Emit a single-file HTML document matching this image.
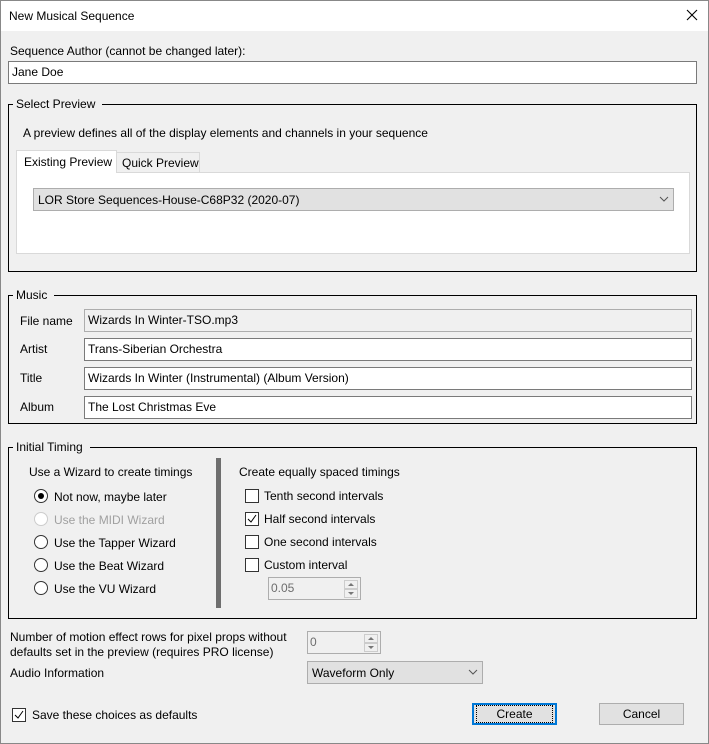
<!DOCTYPE html>
<html><head><meta charset="utf-8"><style>
*{box-sizing:border-box;margin:0;padding:0}
body{width:709px;height:744px;overflow:hidden;background:#f0f0f0;font-family:"Liberation Sans",sans-serif;font-size:12px;color:#000;position:relative}
.a{position:absolute;white-space:nowrap}
.win{position:absolute;left:0;top:0;width:709px;height:744px;border:1px solid #888}
.tb{position:absolute;left:1px;top:1px;width:707px;height:30px;background:#fff}
.inp{position:absolute;background:#fff;border:1px solid #7a7a7a;height:23px;padding:3px 0 0 3px;line-height:15px}
.grp{position:absolute;border:1px solid #000}
.lg{position:absolute;background:#f0f0f0;padding:0 7px 0 3px;top:-8px;left:4px;line-height:14px}
.cb{position:absolute;width:14px;height:14px;border:1px solid #333;background:#fff}
.rd{position:absolute;width:14px;height:14px;border:1px solid #333;border-radius:50%;background:#fff}
.combo{position:absolute;background:#e1e1e1;border:1px solid #adadad;height:23px;padding:4px 0 0 4px;line-height:14px}
.btn{position:absolute;background:#e1e1e1;border:1px solid #adadad;height:22px;text-align:center;line-height:20px}
.spin{position:absolute;border:1px solid #adadad;background:#f0f0f0;height:23px;color:#6d6d6d;padding:3px 0 0 2px;line-height:15px}
.sp{position:absolute;right:2px;width:14px;height:9px;background:#f0f0f0;border:1px solid #ccc}
.sp svg{position:absolute;left:3px;top:2px}
</style></head><body>
<div class="win"></div>
<div class="tb"></div>
<div class="a" style="left:9px;top:9px">New Musical Sequence</div>
<svg class="a" style="left:686px;top:9px" width="12" height="12"><path d="M1 1L11 11M11 1L1 11" stroke="#000" stroke-width="1.1"/></svg>

<div class="a" style="left:10px;top:44px">Sequence Author (cannot be changed later):</div>
<div class="inp" style="left:8px;top:61px;width:689px">Jane Doe</div>

<div class="grp" style="left:8px;top:104px;width:689px;height:168px"><div class="lg">Select Preview</div></div>
<div class="a" style="left:23px;top:126px">A preview defines all of the display elements and channels in your sequence</div>
<div class="a" style="left:16px;top:172px;width:674px;height:82px;background:#fff;border:1px solid #d9d9d9"></div>
<div class="a" style="left:16px;top:150px;width:101px;height:23px;background:#fff;border:1px solid #d9d9d9;border-bottom:none;padding:4px 0 0 7px">Existing Preview</div>
<div class="a" style="left:116px;top:152px;width:84px;height:21px;background:#f0f0f0;border:1px solid #d9d9d9;padding:3px 0 0 5px">Quick Preview</div>
<div class="combo" style="left:33px;top:188px;width:641px">LOR Store Sequences-House-C68P32 (2020-07)</div>
<svg class="a" style="left:659px;top:196px" width="10" height="6"><path d="M1 1L5 5L9 1" stroke="#555" fill="none"/></svg>

<div class="grp" style="left:8px;top:295px;width:689px;height:129px"><div class="lg">Music</div></div>
<div class="a" style="left:20px;top:314px">File name</div>
<div class="inp" style="left:84px;top:309px;width:608px;background:#f0f0f0;border-color:#adadad">Wizards In Winter-TSO.mp3</div>
<div class="a" style="left:20px;top:342px">Artist</div>
<div class="inp" style="left:84px;top:338px;width:608px">Trans-Siberian Orchestra</div>
<div class="a" style="left:20px;top:371px">Title</div>
<div class="inp" style="left:84px;top:367px;width:608px">Wizards In Winter (Instrumental) (Album Version)</div>
<div class="a" style="left:20px;top:400px">Album</div>
<div class="inp" style="left:84px;top:396px;width:608px">The Lost Christmas Eve</div>

<div class="grp" style="left:8px;top:447px;width:689px;height:172px"><div class="lg">Initial Timing</div></div>
<div class="a" style="left:29px;top:465px">Use a Wizard to create timings</div>
<div class="rd" style="left:34px;top:489px"></div><div class="a" style="left:38px;top:493px;width:6px;height:6px;border-radius:50%;background:#000"></div>
<div class="a" style="left:54px;top:490px">Not now, maybe later</div>
<div class="rd" style="left:34px;top:512px;border-color:#ccc"></div><div class="a" style="left:54px;top:513px;color:#a0a0a0">Use the MIDI Wizard</div>
<div class="rd" style="left:34px;top:535px"></div><div class="a" style="left:54px;top:536px">Use the Tapper Wizard</div>
<div class="rd" style="left:34px;top:558px"></div><div class="a" style="left:54px;top:559px">Use the Beat Wizard</div>
<div class="rd" style="left:34px;top:581px"></div><div class="a" style="left:54px;top:582px">Use the VU Wizard</div>
<div class="a" style="left:216px;top:458px;width:5px;height:150px;background:#6e6e6e"></div>
<div class="a" style="left:239px;top:465px">Create equally spaced timings</div>
<div class="cb" style="left:245px;top:489px"></div><div class="a" style="left:264px;top:489px">Tenth second intervals</div>
<div class="cb" style="left:245px;top:512px"></div><svg class="a" style="left:247px;top:514px" width="10" height="10"><path d="M1 5L4 8L9 1" stroke="#000" fill="none"/></svg><div class="a" style="left:264px;top:512px">Half second intervals</div>
<div class="cb" style="left:245px;top:535px"></div><div class="a" style="left:264px;top:535px">One second intervals</div>
<div class="cb" style="left:245px;top:558px"></div><div class="a" style="left:264px;top:558px">Custom interval</div>
<div class="spin" style="left:268px;top:577px;width:93px">0.05<div class="sp" style="top:2px"><svg width="6" height="4"><path d="M0 3L3 0L6 3Z" fill="#777"/></svg></div><div class="sp" style="top:11px"><svg width="6" height="4"><path d="M0 0L3 3L6 0Z" fill="#777"/></svg></div></div>

<div class="a" style="left:10px;top:630px;line-height:15px">Number of motion effect rows for pixel props without<br>defaults set in the preview (requires PRO license)</div>
<div class="spin" style="left:307px;top:631px;width:74px">0<div class="sp" style="top:2px"><svg width="6" height="4"><path d="M0 3L3 0L6 3Z" fill="#777"/></svg></div><div class="sp" style="top:11px"><svg width="6" height="4"><path d="M0 0L3 3L6 0Z" fill="#777"/></svg></div></div>
<div class="a" style="left:10px;top:666px">Audio Information</div>
<div class="combo" style="left:307px;top:661px;width:176px">Waveform Only</div>
<svg class="a" style="left:468px;top:669px" width="10" height="6"><path d="M1 1L5 5L9 1" stroke="#555" fill="none"/></svg>

<div class="cb" style="left:12px;top:708px"></div><svg class="a" style="left:14px;top:710px" width="10" height="10"><path d="M1 5L4 8L9 1" stroke="#000" fill="none"/></svg>
<div class="a" style="left:32px;top:708px">Save these choices as defaults</div>
<div class="btn" style="left:472px;top:703px;width:85px;border:2px solid #0078d7;line-height:18px"><span style="outline:1px dotted #000;outline-offset:1px;display:inline-block;width:73px;line-height:14px">Create</span></div>
<div class="btn" style="left:599px;top:703px;width:85px">Cancel</div>
</body></html>
